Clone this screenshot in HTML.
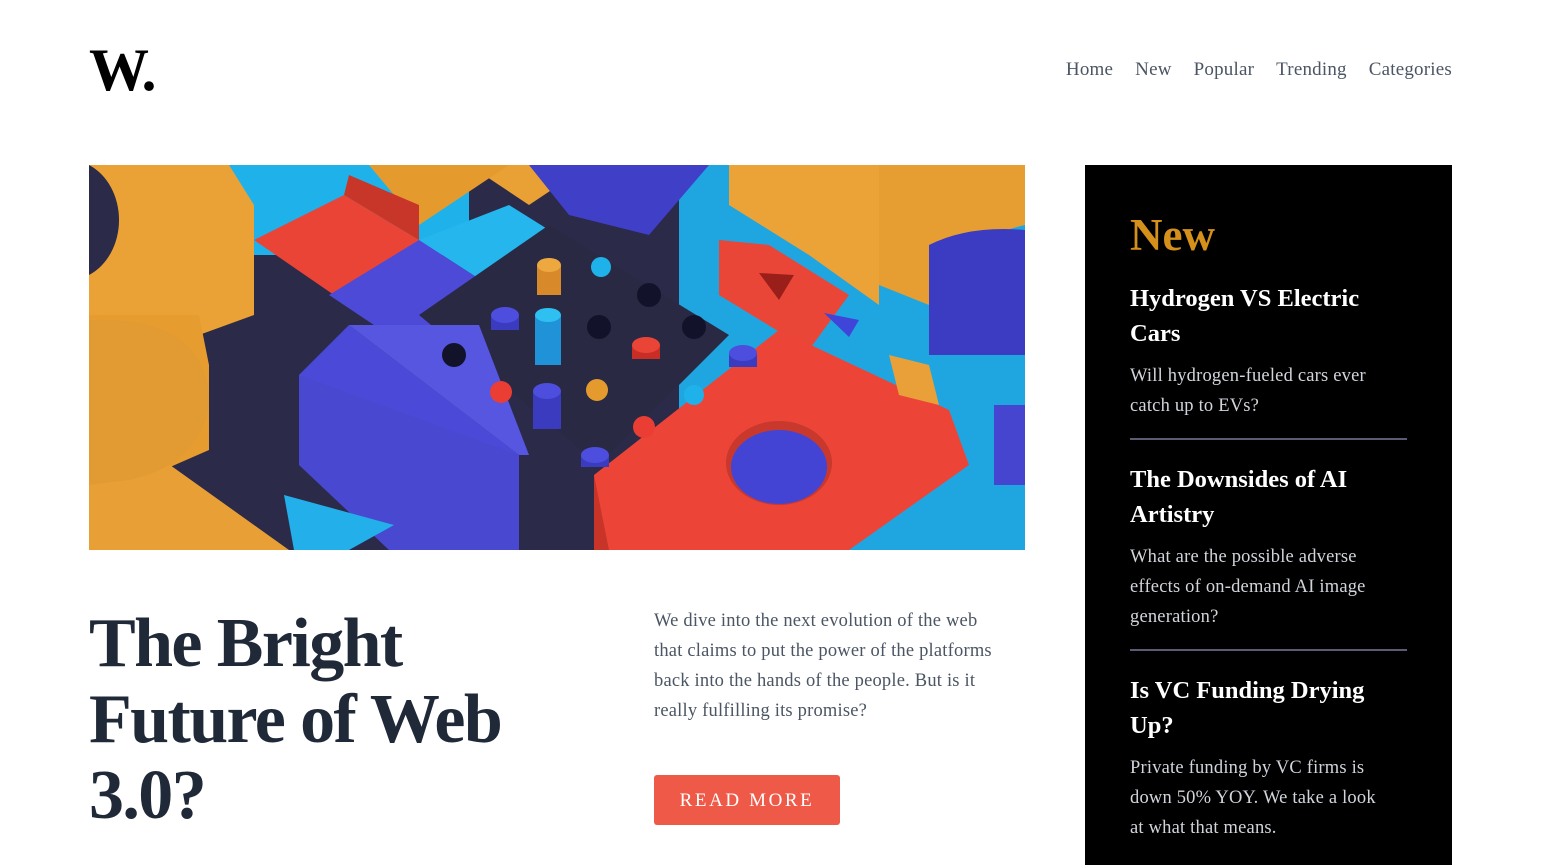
<!DOCTYPE html>
<html><head><meta charset="utf-8"><style>
*{margin:0;padding:0;box-sizing:border-box}
body{width:1541px;height:865px;overflow:hidden;background:#fff;font-family:"Liberation Serif",serif;position:relative}
.logo{position:absolute;left:89px;top:36px;font-size:60px;font-weight:bold;color:#000;letter-spacing:-2px}
nav{position:absolute;right:89px;top:59px;font-size:19px;color:#4b5563;letter-spacing:0.2px}
nav span{margin-left:22px}
.img{position:absolute;left:89px;top:165px;width:936px;height:385px;overflow:hidden}
h1{position:absolute;left:89px;top:606px;font-size:70px;line-height:76px;color:#1f2937;letter-spacing:-1.6px;font-weight:bold}
.desc{position:absolute;left:654px;top:606px;width:350px;font-size:18.5px;line-height:30px;color:#4b5563;letter-spacing:0.2px}
.btn{position:absolute;left:654px;top:775px;width:186px;height:50px;background:#ef5a48;border-radius:3px;color:#fff;font-size:19px;letter-spacing:2.6px;text-align:center;line-height:51px}
.side{position:absolute;left:1085px;top:165px;width:367px;height:700px;background:#000;padding:0 45px}
.side h2{font-size:45px;color:#d4901a;margin-top:45px;line-height:50px}
.side h3{color:#fff;font-size:24.5px;line-height:35px;font-weight:bold}
.side p{color:#d1d5db;font-size:18.5px;line-height:30px;margin-top:10px;width:262px;letter-spacing:0.2px}
.side hr{border:0;border-top:2px solid #5b5b73;margin:17px 0 22px}
</style></head><body>
<div class="logo">W.</div>
<nav><span>Home</span><span>New</span><span>Popular</span><span>Trending</span><span>Categories</span></nav>
<div class="img"><svg width="936" height="385" viewBox="0 0 936 385">
<rect width="936" height="385" fill="#2b2a48"/>
<rect x="60" y="0" width="320" height="90" fill="#1fb2ea"/>
<rect x="590" y="0" width="346" height="385" fill="#1fa6e0"/>
<polygon points="380,0 500,0 440,40" fill="#e9a034"/>
<polygon points="440,0 620,0 560,70 480,50" fill="#3f3fc8"/>
<polygon points="280,0 420,0 330,60" fill="#e59a2e"/>
<path d="M0 0 H140 L165 40 V150 L110 170 H0 V110 A50 60 0 0 0 0 0 Z" fill="#eaa236"/>
<path d="M0 150 H110 L120 200 V285 L40 320 H0 Z" fill="#e79c30"/>
<path d="M0 280 L60 285 L200 385 H0 Z" fill="#e8a036"/>
<path d="M0 155 Q120 150 120 240 Q110 300 40 315 L0 320 Z" fill="#e29a33"/>
<polygon points="165,75 255,30 330,75 245,130" fill="#ea4436"/>
<polygon points="255,30 330,75 330,40 260,10" fill="#c8362a"/>
<polygon points="330,75 420,40 500,90 415,130" fill="#25b6ee"/>
<polygon points="240,130 330,75 415,130 330,190" fill="#4c4ad6"/>
<polygon points="330,150 460,60 640,170 510,300" fill="#2a2944"/>
<polygon points="210,210 260,160 430,290 430,385 330,385 210,300" fill="#4b4ad8"/>
<polygon points="210,210 430,290 430,385 300,385 210,300" fill="#4848d0"/>
<polygon points="260,160 390,160 440,290 430,290" fill="#5656e0"/>
<polygon points="630,75 680,80 760,130 720,185 630,130" fill="#ea4638"/>
<polygon points="505,310 690,165 860,245 880,300 760,385 505,385" fill="#ec4538"/>
<polygon points="505,310 520,385 505,385" fill="#c83428"/>
<ellipse cx="690" cy="298" rx="53" ry="42" fill="#c8382c"/>
<ellipse cx="690" cy="302" rx="48" ry="37" fill="#4444d4"/>
<path d="M640 0 H790 V140 L720 90 L640 40 Z" fill="#eba237"/>
<path d="M790 0 H936 V60 Q850 80 840 140 L790 120 Z" fill="#e69e32"/>
<path d="M840 80 Q880 60 936 65 V190 H840 Z" fill="#3c3cc2"/>
<polygon points="800,190 840,200 850,240 810,230" fill="#e9a038"/>
<rect x="905" y="240" width="31" height="80" fill="#4545cf"/>
<polygon points="195,330 305,360 260,385 205,385" fill="#23b0ea"/>
<polygon points="670,108 705,110 690,135" fill="#9a1f1a"/>
<polygon points="735,148 770,155 760,172" fill="#3f45d8"/>
<circle cx="512" cy="102" r="10" fill="#1fb2ea"/>
<circle cx="560" cy="130" r="12" fill="#12122a"/><circle cx="510" cy="162" r="12" fill="#12122a"/>
<circle cx="605" cy="162" r="12" fill="#12122a"/><circle cx="365" cy="190" r="12" fill="#12122a"/>
<circle cx="605" cy="230" r="10" fill="#1fb2ea"/><circle cx="412" cy="227" r="11" fill="#ea3d34"/>
<circle cx="508" cy="225" r="11" fill="#e59a2e"/><circle cx="555" cy="262" r="11" fill="#ea3d34"/>
<rect x="448" y="100" width="24" height="30" fill="#d88a2a"/><ellipse cx="460" cy="100" rx="12" ry="7" fill="#eda840"/>
<rect x="446" y="150" width="26" height="50" fill="#1f92d8"/><ellipse cx="459" cy="150" rx="13" ry="7" fill="#2fc0f2"/>
<rect x="402" y="150" width="28" height="15" fill="#3b3bc0"/><ellipse cx="416" cy="150" rx="14" ry="8" fill="#4d4dde"/>
<rect x="543" y="180" width="28" height="14" fill="#c82e26"/><ellipse cx="557" cy="180" rx="14" ry="8" fill="#ea4436"/>
<rect x="640" y="188" width="28" height="14" fill="#3b3bc0"/><ellipse cx="654" cy="188" rx="14" ry="8" fill="#4d4dde"/>
<rect x="444" y="226" width="28" height="38" fill="#3b3bc0"/><ellipse cx="458" cy="226" rx="14" ry="8" fill="#4d4dde"/>
<rect x="492" y="290" width="28" height="12" fill="#3b3bc0"/><ellipse cx="506" cy="290" rx="14" ry="8" fill="#4d4dde"/>
</svg></div>
<h1>The Bright<br>Future of Web<br>3.0?</h1>
<div class="desc">We dive into the next evolution of the web that claims to put the power of the platforms back into the hands of the people. But is it really fulfilling its promise?</div>
<div class="btn">READ MORE</div>
<div class="side">
<h2>New</h2>
<h3 style="margin-top:21px">Hydrogen VS Electric Cars</h3>
<p>Will hydrogen-fueled cars ever catch up to EVs?</p>
<hr>
<h3>The Downsides of AI Artistry</h3>
<p>What are the possible adverse effects of on-demand AI image generation?</p>
<hr>
<h3>Is VC Funding Drying Up?</h3>
<p>Private funding by VC firms is down 50% YOY. We take a look at what that means.</p>
</div>
</body></html>
